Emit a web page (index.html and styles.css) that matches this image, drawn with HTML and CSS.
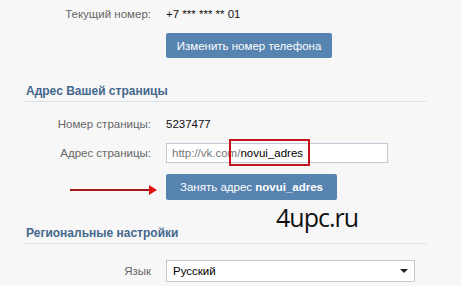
FILE: index.html
```html
<!DOCTYPE html>
<html lang="ru">
<head>
    <meta charset="UTF-8">
    <title>Настройки</title>
    <link rel="stylesheet" href="styles.css">
</head>
<body>
    <div class="settings">
        <div class="form-row row-phone">
            <div class="label">Текущий номер:</div>
            <div class="value">+7 *** *** ** 01</div>
        </div>
        <div class="form-row row-btn">
            <div></div>
            <div><button class="btn btn-phone">Изменить номер телефона</button></div>
        </div>

        <h2 class="section-title title-address">Адрес Вашей страницы</h2>
        <div class="form-row row-id">
            <div class="label">Номер страницы:</div>
            <div class="value">5237477</div>
        </div>
        <div class="form-row row-input">
            <div class="label">Адрес страницы:</div>
            <div class="field-wrap">
                <div class="text-field"><span class="prefix">http://vk.com/</span>novui_adres</div>
                <div class="mark"></div>
            </div>
        </div>
        <div class="form-row row-btn2">
            <div class="arrow-cell"><span class="arrow"></span></div>
            <div><button class="btn btn-address">Занять адрес <b>novui_adres</b></button></div>
        </div>

        <div class="watermark">4upc.ru</div>

        <h2 class="section-title title-region">Региональные настройки</h2>
        <div class="form-row row-lang">
            <div class="label">Язык</div>
            <div class="select">Русский<span class="select-arrow"></span></div>
        </div>
    </div>
</body>
</html>
```

FILE: styles.css
```css
* {
    box-sizing: border-box;
    margin: 0;
    padding: 0;
}

body {
    font-family: "Liberation Sans", Arial, sans-serif;
    font-size: 11.5px;
    color: #000;
    background: #f7f7f7;
    width: 461px;
    height: 286px;
    overflow: hidden;
}

.settings {
    position: relative;
    padding: 4px 0 0 25px;
    width: 426px;
}

.form-row {
    display: grid;
    grid-template-columns: 126px 1fr;
    column-gap: 15px;
    align-items: center;
    min-height: 20px;
}

.label {
    text-align: right;
    color: #666;
}

.value {
    color: #111;
}

.row-btn {
    margin-top: 9px;
}

.btn {
    font-family: inherit;
    font-size: 11.5px;
    color: #fff;
    background: #5683b0;
    border: none;
    border-radius: 2px;
    height: 25px;
    cursor: pointer;
}

.btn-phone {
    width: 166px;
}

.section-title {
    font-size: 12px;
    font-weight: bold;
    color: #45688e;
    padding: 0 0 2px 1px;
    line-height: 16px;
    border-bottom: 1px solid #dae1e8;
}

.title-address {
    margin-top: 25px;
}

.row-id {
    margin-top: 12px;
}

.row-input {
    margin-top: 9px;
}

.field-wrap {
    position: relative;
}

.text-field {
    width: 222px;
    height: 20px;
    line-height: 18px;
    padding-left: 5px;
    background: #fff;
    border: 1px solid #c0cad5;
}

.prefix {
    color: #777;
}

.mark {
    position: absolute;
    left: 63px;
    top: -4px;
    width: 81px;
    height: 27px;
    border: 2px solid #c4121f;
}

.row-btn2 {
    margin-top: 11px;
}

.btn-address {
    width: 171px;
    height: 26px;
}

.arrow-cell {
    position: relative;
    height: 26px;
}

.arrow {
    position: absolute;
    left: 45px;
    top: 15px;
    width: 80px;
    height: 2px;
    background: #a01818;
}

.arrow::after {
    content: "";
    position: absolute;
    right: -7px;
    top: -4px;
    border-left: 8px solid #e01010;
    border-top: 5px solid transparent;
    border-bottom: 5px solid transparent;
}

.watermark {
    position: absolute;
    left: 276px;
    top: 200px;
    font-family: "Open Sans", sans-serif;
    font-size: 25px;
    letter-spacing: -1px;
    color: #111;
}

.title-region {
    margin-top: 25px;
}

.row-lang {
    margin-top: 16px;
}

.select {
    position: relative;
    width: 249px;
    height: 22px;
    line-height: 20px;
    padding-left: 6px;
    background: #fff;
    border: 1px solid #c0cad5;
}

.select-arrow {
    position: absolute;
    right: 6px;
    top: 8px;
    border-top: 4px solid #222;
    border-left: 4px solid transparent;
    border-right: 4px solid transparent;
}
```
